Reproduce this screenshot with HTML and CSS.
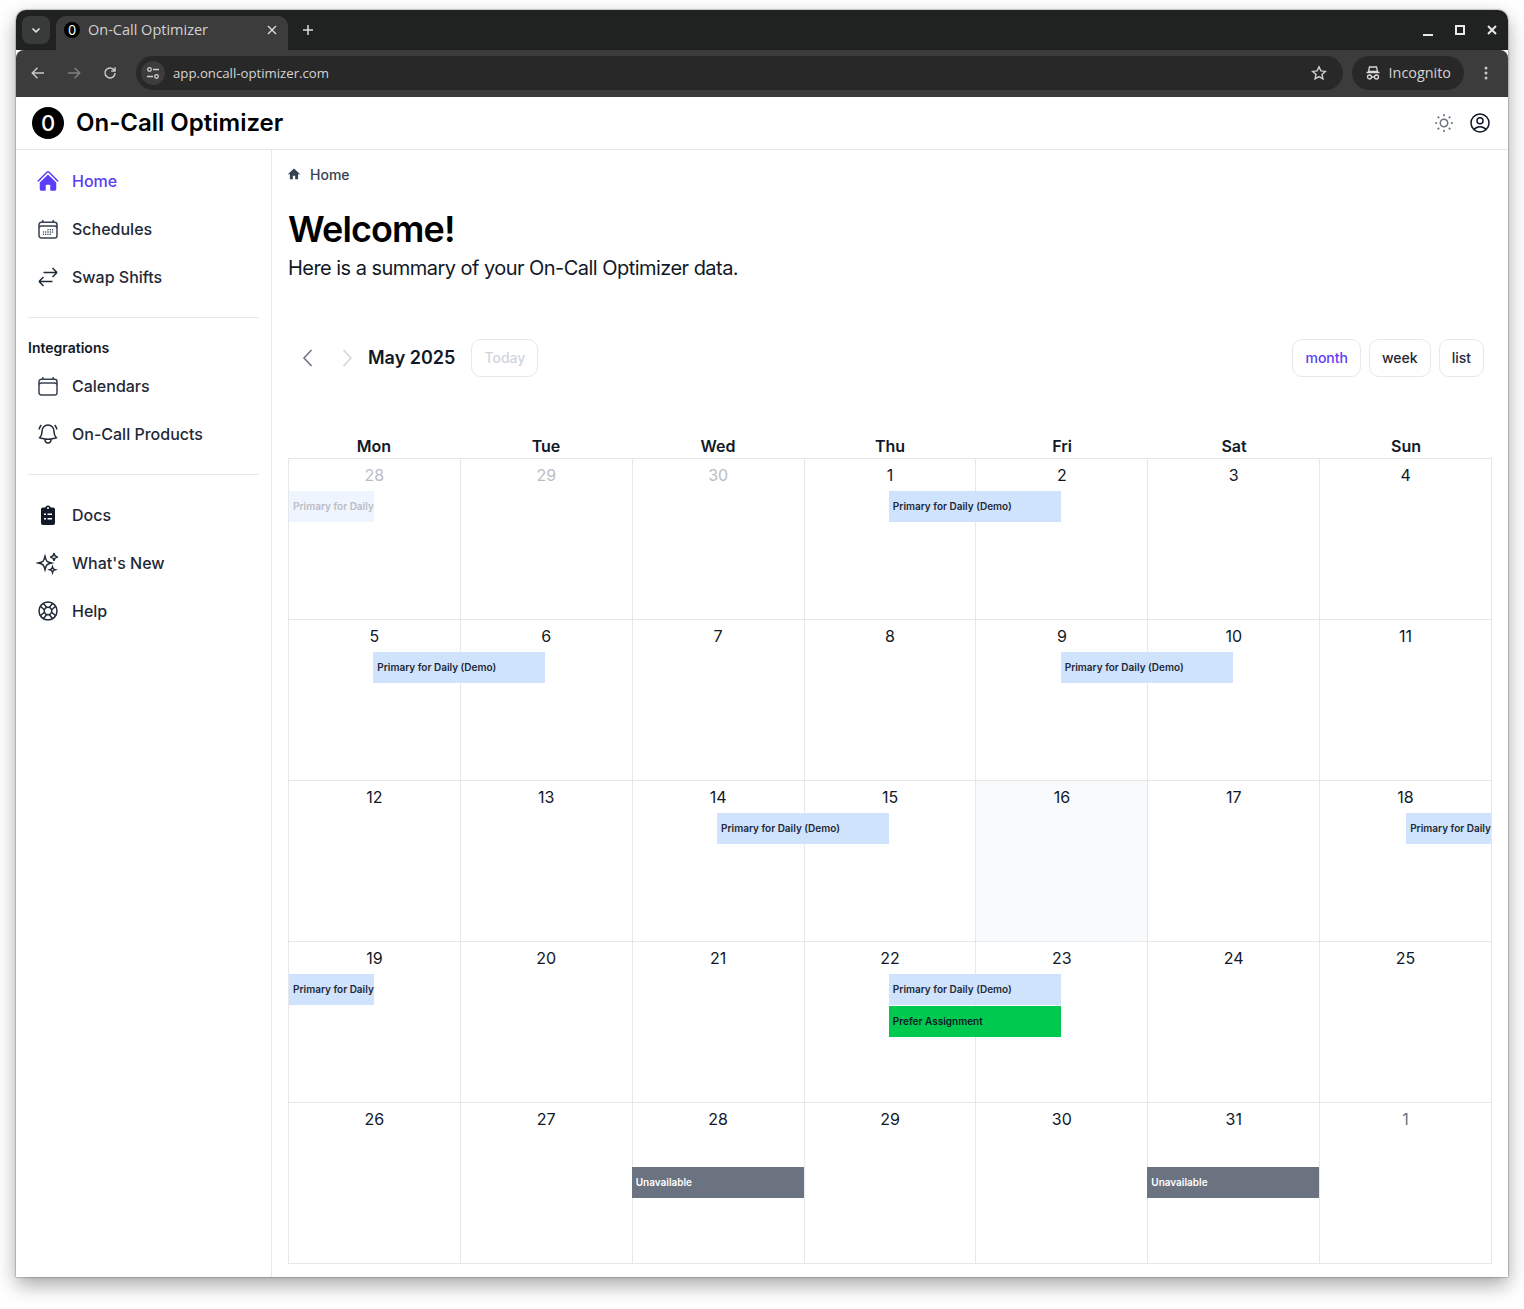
FILE: index.html
```html
<!DOCTYPE html>
<html lang="en">
<head>
    <meta charset="UTF-8">
    <title>On-Call Optimizer</title>
    <link rel="stylesheet" href="styles.css">
</head>
<body>
    <div class="window">
        <!-- Browser tabs -->
        <div class="tabstrip">
            <div class="tab-search">
                <svg width="10" height="10" viewBox="0 0 10 10" fill="none" stroke="#e3e3e3" stroke-width="1.6"><path d="M1.5 3.5 5 6.8l3.5-3.3"/></svg>
            </div>
            <div class="tab">
                <span class="favicon">0</span>
                <span class="tab-title">On-Call Optimizer</span>
                <svg class="tab-close" width="10" height="10" viewBox="0 0 10 10" stroke="#dcdcdc" stroke-width="1.4"><path d="M1 1l8 8M9 1 1 9"/></svg>
            </div>
            <svg class="new-tab" width="12" height="12" viewBox="0 0 12 12" stroke="#dcdcdc" stroke-width="1.5"><path d="M6 1v10M1 6h10"/></svg>
            <div class="window-controls">
                <svg width="12" height="12" viewBox="0 0 12 12" fill="none" stroke="#e8e8e8" stroke-width="2"><path d="M1 11h10"/></svg>
                <svg width="12" height="12" viewBox="0 0 12 12" fill="none" stroke="#e8e8e8" stroke-width="2"><rect x="2" y="2" width="8" height="8"/></svg>
                <svg width="12" height="12" viewBox="0 0 12 12" fill="none" stroke="#e8e8e8" stroke-width="2"><path d="M2 2l8 8M10 2l-8 8"/></svg>
            </div>
        </div>

        <!-- Browser toolbar -->
        <div class="toolbar">
            <svg width="16" height="16" viewBox="0 0 16 16" fill="none" stroke="#c7c7c7" stroke-width="1.5"><path d="M14 8H2.5M7.5 2.8 2.3 8l5.2 5.2"/></svg>
            <svg width="16" height="16" viewBox="0 0 16 16" fill="none" stroke="#7d7d7d" stroke-width="1.5"><path d="M2 8h11.5M8.5 2.8 13.7 8l-5.2 5.2"/></svg>
            <svg width="16" height="16" viewBox="0 0 16 16" fill="none" stroke="#c7c7c7" stroke-width="1.5"><path d="M13 8a5 5 0 1 1-1.5-3.6L13 6M13 2.2V6H9.2"/></svg>
            <div class="omnibox">
                <span class="site-info">
                    <svg width="16" height="16" viewBox="0 0 16 16" fill="none" stroke="#d0d0d0" stroke-width="1.3"><circle cx="4.5" cy="4.5" r="1.8"/><path d="M8 4.500h6M2 11.500h6"/><circle cx="11.500" cy="11.500" r="1.8"/></svg>
                </span>
                <span class="url">app.oncall-optimizer.com</span>
                <svg class="star" width="16" height="16" viewBox="0 0 16 16" fill="none" stroke="#d0d0d0" stroke-width="1.4"><path d="M8 1.800l1.900 4.100 4.400.5-3.300 3 .9 4.400L8 11.600l-3.900 2.200.9-4.400-3.300-3 4.400-.5z"/></svg>
            </div>
            <div class="incognito">
                <svg width="16" height="16" viewBox="0 0 16 16" fill="none" stroke="#d8d8d8" stroke-width="1.3"><path d="M4.500 2h7l1 4.500h-9zM1.500 7.500h13"/><circle cx="4.500" cy="12" r="2"/><circle cx="11.500" cy="12" r="2"/><path d="M6.500 12h3"/></svg>
                <span>Incognito</span>
            </div>
            <svg class="kebab" width="4" height="14" viewBox="0 0 4 14" fill="#c7c7c7"><circle cx="2" cy="2" r="1.5"/><circle cx="2" cy="7" r="1.5"/><circle cx="2" cy="12" r="1.5"/></svg>
        </div>

        <!-- App header -->
        <header class="app-header">
            <div class="logo">0</div>
            <div class="app-name">On-Call Optimizer</div>
            <div class="header-icons">
                <svg width="24" height="24" viewBox="0 0 24 24" fill="none" stroke="#6b7280" stroke-width="1.5"><path d="M12 3v2.25m6.364.386-1.591 1.591M21 12h-2.25m-.386 6.364-1.591-1.591M12 18.75V21m-4.773-4.227-1.591 1.591M5.250 12H3m4.227-4.773L5.636 5.636M15.750 12a3.750 3.750 0 1 1-7.5 0 3.750 3.750 0 0 1 7.5 0Z"/></svg>
                <svg width="24" height="24" viewBox="0 0 24 24" fill="none" stroke="#111827" stroke-width="1.5"><path d="M17.982 18.725A7.488 7.488 0 0 0 12 15.750a7.488 7.488 0 0 0-5.982 2.975m11.963 0a9 9 0 1 0-11.963 0m11.963 0A8.966 8.966 0 0 1 12 21a8.966 8.966 0 0 1-5.982-2.275M15 9.750a3 3 0 1 1-6 0 3 3 0 0 1 6 0Z"/></svg>
            </div>
        </header>

        <div class="app-body">
            <!-- Sidebar -->
            <nav class="sidebar">
                <a class="side-link active">
                    <svg width="24" height="24" viewBox="0 0 24 24" fill="#5b3df5"><path d="M11.470 3.841a.75.75 0 0 1 1.060 0l8.690 8.690a.75.75 0 1 0 1.060-1.061l-8.689-8.690a2.250 2.250 0 0 0-3.182 0l-8.690 8.690a.75.75 0 1 0 1.061 1.060l8.690-8.689Z"/><path d="m12 5.432 8.159 8.159c.03.03.06.058.091.086v6.198c0 1.035-.84 1.875-1.875 1.875H15a.75.75 0 0 1-.75-.75v-4.500a.75.75 0 0 0-.75-.75h-3a.75.75 0 0 0-.75.75V21a.75.75 0 0 1-.75.75H5.625a1.875 1.875 0 0 1-1.875-1.875v-6.198a2.290 2.290 0 0 0 .091-.086L12 5.432Z"/></svg>
                    Home
                </a>
                <a class="side-link">
                    <svg width="24" height="24" viewBox="0 0 24 24" fill="none" stroke="#374151" stroke-width="1.5"><path d="M6.750 3v2.250M17.250 3v2.250M3 18.750V7.500a2.250 2.250 0 0 1 2.250-2.250h13.500A2.250 2.250 0 0 1 21 7.500v11.250m-18 0A2.250 2.250 0 0 0 5.250 21h13.500A2.250 2.250 0 0 0 21 18.750m-18 0v-7.500A2.250 2.250 0 0 1 5.250 9h13.500A2.250 2.250 0 0 1 21 11.250v7.500"/><path d="M12 12.750h.01M12 15h.01M12 17.250h.01M9.750 15h.01M9.750 17.250h.01M7.500 15h.01M7.500 17.250h.01M14.250 12.750h.01M14.250 15h.01M14.250 17.250h.01M16.500 12.750h.01M16.500 15h.01" stroke-linecap="round"/></svg>
                    Schedules
                </a>
                <a class="side-link">
                    <svg width="24" height="24" viewBox="0 0 24 24" fill="none" stroke="#1f2937" stroke-width="1.5"><path d="M7.500 21 3 16.500m0 0L7.500 12M3 16.500h13.500m0-13.500L21 7.500m0 0L16.500 12M21 7.500H7.500"/></svg>
                    Swap Shifts
                </a>
                <div class="side-divider"></div>
                <div class="side-heading">Integrations</div>
                <a class="side-link">
                    <svg width="24" height="24" viewBox="0 0 24 24" fill="none" stroke="#374151" stroke-width="1.5"><path d="M6.750 3v2.250M17.250 3v2.250M3 18.750V7.500a2.250 2.250 0 0 1 2.250-2.250h13.500A2.250 2.250 0 0 1 21 7.500v11.250m-18 0A2.250 2.250 0 0 0 5.250 21h13.500A2.250 2.250 0 0 0 21 18.750m-18 0v-7.500A2.250 2.250 0 0 1 5.250 9h13.500A2.250 2.250 0 0 1 21 11.250v7.500"/></svg>
                    Calendars
                </a>
                <a class="side-link">
                    <svg width="24" height="24" viewBox="0 0 24 24" fill="none" stroke="#1f2937" stroke-width="1.5"><path d="M14.857 17.082a23.848 23.848 0 0 0 5.454-1.310A8.967 8.967 0 0 1 18 9.750V9A6 6 0 0 0 6 9v.75a8.967 8.967 0 0 1-2.312 6.022c1.733.64 3.560 1.085 5.455 1.310m5.714 0a24.255 24.255 0 0 1-5.714 0m5.714 0a3 3 0 1 1-5.714 0M3.124 7.500A8.969 8.969 0 0 1 5.292 3m13.416 0a8.969 8.969 0 0 1 2.168 4.500"/></svg>
                    On-Call Products
                </a>
                <div class="side-divider second"></div>
                <a class="side-link">
                    <svg width="24" height="24" viewBox="0 0 24 24" fill="#111827"><path d="M7 4.500h2.200a3 3 0 0 1 5.600 0H17a2 2 0 0 1 2 2V20a2 2 0 0 1-2 2H7a2 2 0 0 1-2-2V6.500a2 2 0 0 1 2-2z"/><path d="M8 10.500h2V12H8zM11.500 10.500H16V12h-4.500zM8 15h2v1.500H8zM11.500 15H16v1.500h-4.500z" fill="#fff"/><circle cx="12" cy="5" r="1" fill="#fff"/></svg>
                    Docs
                </a>
                <a class="side-link">
                    <svg width="24" height="24" viewBox="0 0 24 24" fill="none" stroke="#1f2937" stroke-width="1.5"><path d="M9.813 15.904 9 18.750l-.813-2.846a4.500 4.500 0 0 0-3.090-3.090L2.250 12l2.846-.813a4.500 4.500 0 0 0 3.090-3.090L9 5.250l.813 2.846a4.500 4.500 0 0 0 3.090 3.090L15.750 12l-2.846.813a4.500 4.500 0 0 0-3.090 3.090ZM18.259 8.715 18 9.750l-.259-1.035a3.375 3.375 0 0 0-2.455-2.456L14.250 6l1.036-.259a3.375 3.375 0 0 0 2.455-2.456L18 2.250l.259 1.035a3.375 3.375 0 0 0 2.456 2.456L21.750 6l-1.035.259a3.375 3.375 0 0 0-2.456 2.456ZM16.894 20.567 16.500 21.750l-.394-1.183a2.250 2.250 0 0 0-1.423-1.423L13.500 18.750l1.183-.394a2.250 2.250 0 0 0 1.423-1.423l.394-1.183.394 1.183a2.250 2.250 0 0 0 1.423 1.423l1.183.394-1.183.394a2.250 2.250 0 0 0-1.423 1.423Z"/></svg>
                    What's New
                </a>
                <a class="side-link">
                    <svg width="24" height="24" viewBox="0 0 24 24" fill="none" stroke="#1f2937" stroke-width="1.5"><circle cx="12" cy="12" r="9"/><circle cx="12" cy="12" r="3.750"/><path d="M7.288 4.330l3.448 4.138M16.712 4.330l-3.448 4.138M4.330 7.288l4.138 3.448M19.670 7.288l-4.138 3.448M4.330 16.712l4.138-3.448M19.670 16.712l-4.138-3.448M7.288 19.670l3.448-4.138M16.712 19.670l-3.448-4.138"/></svg>
                    Help
                </a>
            </nav>

            <!-- Main content -->
            <main class="content">
                <div class="breadcrumb">
                    <svg width="14" height="14" viewBox="0 0 24 24" fill="#374151"><path d="M12 2.500 1.500 12.500H5V21h5v-6h4v6h5v-8.500h3.500z"/></svg>
                    <span>Home</span>
                </div>
                <h1>Welcome!</h1>
                <p class="summary">Here is a summary of your On-Call Optimizer data.</p>

                <div class="cal-toolbar">
                    <div class="cal-left">
                        <svg class="chevron" width="24" height="24" viewBox="0 0 24 24" fill="none" stroke="#6b7280" stroke-width="1.5"><path d="M15.500 4 8 12l7.500 8"/></svg>
                        <svg class="chevron" width="24" height="24" viewBox="0 0 24 24" fill="none" stroke="#d1d5db" stroke-width="1.5"><path d="M8.500 4 16 12l-7.500 8"/></svg>
                        <span class="cal-title">May 2025</span>
                        <button class="cal-btn disabled">Today</button>
                    </div>
                    <div class="cal-right">
                        <button class="cal-btn selected">month</button>
                        <button class="cal-btn">week</button>
                        <button class="cal-btn">list</button>
                    </div>
                </div>

                <div class="cal-head">
                    <div>Mon</div><div>Tue</div><div>Wed</div><div>Thu</div><div>Fri</div><div>Sat</div><div>Sun</div>
                </div>
                <div class="cal-grid">
                    <div class="day muted"><span class="num">28</span><div class="event half faded">Primary for Daily</div></div>
                    <div class="day muted"><span class="num">29</span></div>
                    <div class="day muted"><span class="num">30</span></div>
                    <div class="day"><span class="num">1</span><div class="event shift">Primary for Daily (Demo)</div></div>
                    <div class="day"><span class="num">2</span></div>
                    <div class="day"><span class="num">3</span></div>
                    <div class="day"><span class="num">4</span></div>

                    <div class="day"><span class="num">5</span><div class="event shift">Primary for Daily (Demo)</div></div>
                    <div class="day"><span class="num">6</span></div>
                    <div class="day"><span class="num">7</span></div>
                    <div class="day"><span class="num">8</span></div>
                    <div class="day"><span class="num">9</span><div class="event shift">Primary for Daily (Demo)</div></div>
                    <div class="day"><span class="num">10</span></div>
                    <div class="day"><span class="num">11</span></div>

                    <div class="day"><span class="num">12</span></div>
                    <div class="day"><span class="num">13</span></div>
                    <div class="day"><span class="num">14</span><div class="event shift">Primary for Daily (Demo)</div></div>
                    <div class="day"><span class="num">15</span></div>
                    <div class="day today"><span class="num">16</span></div>
                    <div class="day"><span class="num">17</span></div>
                    <div class="day"><span class="num">18</span><div class="event half end">Primary for Daily</div></div>

                    <div class="day"><span class="num">19</span><div class="event half">Primary for Daily</div></div>
                    <div class="day"><span class="num">20</span></div>
                    <div class="day"><span class="num">21</span></div>
                    <div class="day"><span class="num">22</span><div class="event shift">Primary for Daily (Demo)</div><div class="event shift prefer">Prefer Assignment</div></div>
                    <div class="day"><span class="num">23</span></div>
                    <div class="day"><span class="num">24</span></div>
                    <div class="day"><span class="num">25</span></div>

                    <div class="day"><span class="num">26</span></div>
                    <div class="day"><span class="num">27</span></div>
                    <div class="day"><span class="num">28</span><div class="event unavailable">Unavailable</div></div>
                    <div class="day"><span class="num">29</span></div>
                    <div class="day"><span class="num">30</span></div>
                    <div class="day"><span class="num">31</span><div class="event unavailable">Unavailable</div></div>
                    <div class="day next"><span class="num">1</span></div>
                </div>
            </main>
        </div>
    </div>
</body>
</html>
```
FILE: styles.css
```css
* {
    margin: 0;
    padding: 0;
    box-sizing: border-box;
}

body {
    background-color: #ffffff;
    min-height: 1309px;
    padding: 10px 16px 0;
    font-family: Inter, "Liberation Sans", sans-serif;
    color: #111827;
}

/* Browser window */
.window {
    width: 1492px;
    height: 1267px;
    display: flex;
    flex-direction: column;
    background-color: #ffffff;
    border-radius: 10px 10px 0 0;
    overflow: hidden;
    box-shadow: 0 0 2px rgba(0,0,0,0.6), 0 8px 20px rgba(0,0,0,0.35);
}

.tabstrip {
    height: 40px;
    flex-shrink: 0;
    display: flex;
    align-items: flex-start;
    padding: 6px 0 0 6px;
    background-color: #202221;
}

.tab-search {
    width: 28px;
    height: 28px;
    display: flex;
    align-items: center;
    justify-content: center;
    background-color: #393b3a;
    border-radius: 8px;
    margin-right: 6px;
}

.tab {
    width: 232px;
    height: 34px;
    display: flex;
    align-items: center;
    padding: 0 11px 7px 8px;
    background-color: #3c3c3c;
    border-radius: 10px 10px 0 0;
}

.favicon {
    width: 16px;
    height: 16px;
    display: flex;
    align-items: center;
    justify-content: center;
    border-radius: 50%;
    background-color: #000;
    color: #fff;
    font-size: 13px;
    margin-right: 8px;
}

.tab-title {
    flex: 1;
    color: #d2d2d2;
    font-family: "Open Sans", sans-serif;
    font-size: 14.5px;
}

.new-tab {
    margin: 8px 0 0 14px;
}

.window-controls {
    margin-left: auto;
    display: flex;
    gap: 20px;
    padding: 8px 10px 0 0;
}

.toolbar {
    height: 47px;
    flex-shrink: 0;
    display: flex;
    align-items: center;
    gap: 20px;
    padding: 0 14px 2px 14px;
    background-color: #3c3c3c;
    border-radius: 8px 8px 0 0;
}

.omnibox {
    flex: 1;
    height: 34px;
    display: flex;
    align-items: center;
    margin-left: -2px;
    padding: 0 16px 0 5px;
    background-color: #282828;
    border-radius: 17px;
}

.site-info {
    width: 24px;
    height: 24px;
    display: flex;
    align-items: center;
    justify-content: center;
    border-radius: 50%;
    background-color: #3c3c3c;
    margin-right: 8px;
}

.url {
    flex: 1;
    color: #d4d4d4;
    font-family: "Open Sans", sans-serif;
    font-size: 13.2px;
}

.incognito {
    height: 34px;
    display: flex;
    align-items: center;
    gap: 8px;
    margin-left: -11px;
    padding: 0 13px;
    background-color: #282828;
    border-radius: 17px;
    color: #d4d4d4;
    font-family: "Open Sans", sans-serif;
    font-size: 14.4px;
}

.kebab {
    margin: 0 6px 0 0;
}

/* App header */
.app-header {
    height: 53px;
    flex-shrink: 0;
    display: flex;
    align-items: center;
    padding: 0 16px;
    border-bottom: 1px solid #e5e7eb;
}

.logo {
    width: 32px;
    height: 32px;
    display: flex;
    align-items: center;
    justify-content: center;
    border-radius: 50%;
    background-color: #000;
    color: #fff;
    font-size: 22px;
    font-weight: 500;
    margin-right: 12px;
}

.app-name {
    font-size: 24px;
    font-weight: 600;
    color: #000;
    margin-bottom: 2px;
}

.header-icons {
    margin-left: auto;
    display: flex;
    gap: 12px;
}

.app-body {
    flex: 1;
    display: flex;
    min-height: 0;
}

/* Sidebar */
.sidebar {
    width: 256px;
    flex-shrink: 0;
    padding: 7px 12px;
    border-right: 1px solid #e5e7eb;
}

.side-link {
    height: 48px;
    display: flex;
    align-items: center;
    gap: 12px;
    padding-left: 8px;
    font-size: 16px;
    font-weight: 500;
    color: #1f2937;
}

.side-link.active {
    color: #5b3df5;
}

.side-divider {
    height: 1px;
    background-color: #e5e7eb;
    margin: 16px 0 21px;
}

.side-divider.second {
    margin: 16px 0 16px;
}

.side-heading {
    font-size: 14px;
    font-weight: 600;
    line-height: 17px;
    color: #111827;
    margin-bottom: 6px;
}

/* Main content */
.content {
    flex: 1;
    padding: 14px 16px 0;
    min-width: 0;
}

.breadcrumb {
    display: flex;
    align-items: center;
    gap: 9px;
    height: 20px;
    font-size: 14px;
    font-weight: 500;
    color: #374151;
}

.breadcrumb svg {
    margin-left: -1px;
}

h1 {
    margin-top: 25px;
    font-size: 36px;
    line-height: 40px;
    font-weight: 600;
    letter-spacing: -0.9px;
    color: #000;
}

.summary {
    margin-top: 7px;
    font-size: 20px;
    line-height: 24px;
    letter-spacing: -0.54px;
    color: #111827;
}

.cal-toolbar {
    display: flex;
    justify-content: space-between;
    align-items: center;
    margin-top: 59px;
    padding-right: 8px;
}

.cal-left {
    display: flex;
    align-items: center;
}

.cal-right {
    display: flex;
    gap: 8px;
}

.chevron {
    margin-left: 8px;
    margin-right: 7px;
}

.cal-title {
    margin-left: 2px;
    margin-bottom: 2px;
    font-size: 18px;
    font-weight: 600;
    color: #111827;
}

.cal-btn {
    height: 38px;
    padding: 0 12px 2px;
    background: #fff;
    border: 1px solid #e5e7eb;
    border-radius: 10px;
    font-family: inherit;
    font-size: 14px;
    font-weight: 500;
    color: #1f2937;
}

.cal-left .cal-btn {
    margin-left: 16px;
}

.cal-btn.disabled {
    color: #d1d5db;
}

.cal-btn.selected {
    color: #5b3df5;
}

/* Calendar */
.cal-head {
    display: grid;
    grid-template-columns: repeat(7, 1fr);
    margin-top: 59px;
    height: 22px;
    line-height: 20px;
    font-size: 16px;
    font-weight: 600;
    text-align: center;
    color: #111827;
}

.cal-grid {
    display: grid;
    grid-template-columns: repeat(7, 1fr);
    grid-auto-rows: 161px;
    border-top: 1px solid #e5e7eb;
    border-left: 1px solid #e5e7eb;
}

.day {
    position: relative;
    border-right: 1px solid #e5e7eb;
    border-bottom: 1px solid #e5e7eb;
    text-align: center;
    padding-top: 6px;
    font-size: 16px;
    line-height: 20px;
    color: #111827;
}

.day.muted .num {
    color: #bcbcc4;
}

.day.next .num {
    color: #6b7280;
}

.day.today {
    background-color: #f9fafb;
}

.event {
    position: absolute;
    z-index: 1;
    top: 32px;
    left: 0;
    height: 31px;
    width: 172px;
    padding-left: 4px;
    text-align: left;
    font-size: 10px;
    line-height: 31px;
    font-weight: 600;
    white-space: nowrap;
    overflow: hidden;
    color: #1f2937;
    background-color: #cfe3fc;
}

.event.shift {
    left: 84.3px;
}

.event.half {
    width: 85px;
}

.event.half.end {
    left: 86px;
}

.event.faded {
    background-color: #eff5fe;
    color: #bcbcc4;
}

.event.prefer {
    top: 64px;
    background-color: #00c950;
    color: #111827;
}

.event.unavailable {
    top: 64px;
    left: -1px;
    background-color: #6b7280;
    color: #fff;
}
```
